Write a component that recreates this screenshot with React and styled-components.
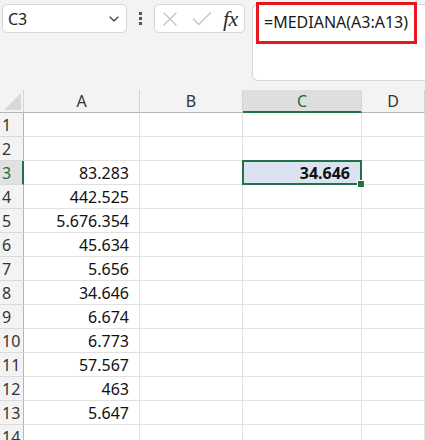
import React from 'react';
import styled, { createGlobalStyle, css } from 'styled-components';
import { ChevronDown, X, Check } from 'lucide-react';

const GlobalStyle = createGlobalStyle`
  html, body {
    margin: 0;
    padding: 0;
    background: #f3f3f3;
  }
  body {
    font-family: 'Noto Sans', 'Open Sans', sans-serif;
    color: #1f1f1f;
    overflow: hidden;
  }
`;

const Page = styled.div`
  width: 425px;
  height: 440px;
  overflow: hidden;
  display: flex;
  flex-direction: column;
`;

const TopBar = styled.div`
  flex-shrink: 0;
  height: 90px;
  display: flex;
  align-items: flex-start;
  padding: 4px 0 0 2px;
  box-sizing: border-box;
`;

const NameBox = styled.div`
  width: 125px;
  height: 29px;
  box-sizing: border-box;
  background: #fff;
  border: 1px solid #d6d6d6;
  border-radius: 5px;
  display: flex;
  align-items: center;
  justify-content: space-between;
  padding: 0 4px 0 5px;
  font-size: 16px;
  color: #222;
`;

const Dots = styled.div`
  width: 27px;
  height: 29px;
  display: flex;
  flex-direction: column;
  align-items: center;
  justify-content: center;
  gap: 2px;

  span {
    width: 3px;
    height: 3px;
    background: #555;
  }
`;

const ButtonBox = styled.div`
  width: 91px;
  height: 29px;
  box-sizing: border-box;
  background: #fff;
  border: 1px solid #d6d6d6;
  border-radius: 5px;
  display: flex;
  align-items: center;
  padding: 0 2px 0 3px;
  gap: 7px;
  color: #c2c2c2;
`;

const Fx = styled.span`
  font-family: 'Liberation Serif', 'DejaVu Serif', serif;
  font-style: italic;
  font-size: 22px;
  line-height: 1;
  color: #2b2b2b;
  margin-left: 1px;
  letter-spacing: -0.5px;
`;

const FormulaBox = styled.div`
  position: relative;
  flex: 1;
  margin-left: 7px;
  height: 77px;
  box-sizing: border-box;
  background: #fff;
  border: 1px solid #d6d6d6;
  border-right: none;
  border-radius: 6px 0 0 6px;
  padding: 6px 0 0 11px;
  font-size: 16px;
  color: #1a1a1a;
`;

const Highlight = styled.div`
  position: absolute;
  left: 3px;
  top: -3px;
  width: 161px;
  height: 42px;
  box-sizing: border-box;
  border: 3px solid #e8161f;
`;

const Grid = styled.div`
  display: grid;
  grid-template-columns: 24px 116px 103px 119px 1fr;
  grid-auto-rows: 24px;
  grid-template-rows: 23px;
  background: #fff;
  font-size: 16px;
`;

const Corner = styled.div`
  background: #f3f3f3;
  border-right: 1px solid #d4d4d4;
  border-bottom: 1px solid #b5b5b5;
  box-sizing: border-box;
  display: flex;
  align-items: flex-end;
  justify-content: flex-end;
  padding: 0 2px 2px 0;
`;

const ColHead = styled.div`
  background: #f3f3f3;
  border-right: 1px solid #d4d4d4;
  border-bottom: 1px solid #b5b5b5;
  box-sizing: border-box;
  display: flex;
  align-items: center;
  justify-content: center;
  color: #333;

  ${(p) =>
    p.$active &&
    css`
      background: #dedede;
      border-bottom: 2px solid #217346;
      color: #1b6b3e;
    `}
`;

const RowHead = styled.div`
  background: #f3f3f3;
  border-right: 1px solid #b5b5b5;
  border-bottom: 1px solid #dadada;
  box-sizing: border-box;
  display: flex;
  align-items: center;
  padding-left: 2px;
  color: #333;

  ${(p) =>
    p.$active &&
    css`
      background: #e1e1e1;
      border-right: 2px solid #217346;
      color: #1b6b3e;
    `}
`;

const Cell = styled.div`
  position: relative;
  border-right: 1px solid #e1e1e1;
  border-bottom: 1px solid #e1e1e1;
  box-sizing: border-box;
  display: flex;
  align-items: center;
  justify-content: flex-end;
  padding-right: 10px;
  color: #111;

  ${(p) =>
    p.$selected &&
    css`
      background: #dbe3f2;
      font-weight: 700;
      padding-right: 11px;

      &::after {
        content: '';
        position: absolute;
        inset: -1px -1px -1px -1px;
        border: 2px solid #217346;
      }

      &::before {
        content: '';
        position: absolute;
        right: -4px;
        bottom: -4px;
        width: 6px;
        height: 6px;
        background: #217346;
        border: 1px solid #fff;
        z-index: 2;
      }
    `}
`;

const values = [
  null,
  null,
  '83.283',
  '442.525',
  '5.676.354',
  '45.634',
  '5.656',
  '34.646',
  '6.674',
  '6.773',
  '57.567',
  '463',
  '5.647',
  null,
];

const columns = ['A', 'B', 'C', 'D'];

export default function App() {
  return (
    <Page>
      <GlobalStyle />
      <TopBar>
        <NameBox>
          <span>C3</span>
          <ChevronDown size={16} strokeWidth={1.6} color="#333" />
        </NameBox>
        <Dots>
          <span />
          <span />
          <span />
        </Dots>
        <ButtonBox>
          <X size={24} strokeWidth={1.2} />
          <Check size={26} strokeWidth={1.2} />
          <Fx>fx</Fx>
        </ButtonBox>
        <FormulaBox>
          =MEDIANA(A3:A13)
          <Highlight />
        </FormulaBox>
      </TopBar>
      <Grid>
        <Corner>
          <svg width="17" height="17" viewBox="0 0 17 17">
            <polygon points="17,0 17,17 0,17" fill="#d8d8d8" />
          </svg>
        </Corner>
        {columns.map((c) => (
          <ColHead key={c} $active={c === 'C'}>
            {c}
          </ColHead>
        ))}
        {values.map((v, i) => {
          const row = i + 1;
          return (
            <React.Fragment key={row}>
              <RowHead $active={row === 3}>{row}</RowHead>
              <Cell>{v}</Cell>
              <Cell />
              <Cell $selected={row === 3}>{row === 3 ? '34.646' : null}</Cell>
              <Cell />
            </React.Fragment>
          );
        })}
      </Grid>
    </Page>
  );
}
